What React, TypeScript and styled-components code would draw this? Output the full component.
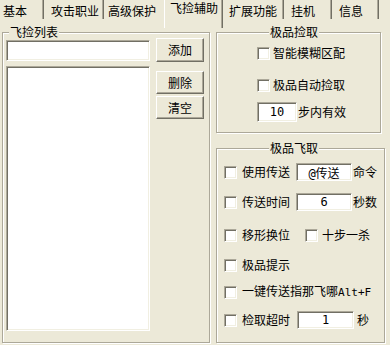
import React from 'react';
import styled, { createGlobalStyle } from 'styled-components';

const GlobalStyle = createGlobalStyle`
  html, body {
    margin: 0;
    padding: 0;
    background: #ece9d8;
  }
  body {
    font-family: "Noto Sans CJK SC", "Noto Sans", sans-serif;
    font-size: 12px;
    color: #000;
  }
`;

const Window = styled.div`
  width: 390px;
  height: 345px;
  overflow: hidden;
  background: #ece9d8;
  display: flex;
  flex-direction: column;
`;

const TabStrip = styled.div`
  display: flex;
  align-items: flex-start;
  height: 32px;
  flex-shrink: 0;
`;

const Tab = styled.div<{ $w: number; $pad: number; $active?: boolean; $noSep?: boolean }>`
  box-sizing: border-box;
  width: ${(p) => p.$w}px;
  height: ${(p) => (p.$active ? 28 : 19)}px;
  padding-left: ${(p) => p.$pad}px;
  padding-top: ${(p) => (p.$active ? 1 : 4)}px;
  line-height: 14px;
  white-space: nowrap;
  border-left: 1px solid ${(p) => (p.$active ? '#ffffff' : 'transparent')};
  border-right: 1px solid ${(p) => (p.$noSep ? 'transparent' : '#716f64')};
  box-shadow: ${(p) => (p.$noSep ? 'none' : 'inset -1px 0 0 #aca899')};
`;

const Body = styled.div`
  display: flex;
  gap: 6px;
  padding-left: 2px;
`;

const GroupBox = styled.div<{ $w: number; $h: number }>`
  position: relative;
  box-sizing: border-box;
  width: ${(p) => p.$w}px;
  height: ${(p) => p.$h}px;
  border: 1px solid #aca899;
  box-shadow: inset 1px 1px 0 #ffffff, 1px 1px 0 #ffffff;
  flex-shrink: 0;
`;

const GroupTitle = styled.span<{ $left: number }>`
  position: absolute;
  top: -9px;
  left: ${(p) => p.$left}px;
  padding: 0 1px;
  line-height: 16px;
  background: #ece9d8;
  white-space: nowrap;
`;

const ListGroup = styled(GroupBox)`
  display: flex;
  gap: 6px;
  padding: 0 0 11px 3px;
`;

const ListColumn = styled.div`
  display: flex;
  flex-direction: column;
  width: 144px;
  padding-top: 7px;
  gap: 5px;
`;

const sunken = `
  box-sizing: border-box;
  background: #ffffff;
  border: 1px solid;
  border-color: #aca899 #ffffff #ffffff #aca899;
  box-shadow: inset 1px 1px 0 #716f64, inset -1px -1px 0 #f1efe2;
`;

const TextField = styled.input<{ $w: number; $h: number; $ml?: number }>`
  ${sunken}
  width: ${(p) => p.$w}px;
  height: ${(p) => p.$h}px;
  padding: 0;
  margin: 0 0 0 ${(p) => p.$ml ?? 0}px;
  outline: none;
  text-align: center;
  font-family: "DejaVu Sans Mono", "Noto Sans CJK SC", monospace;
  font-size: 12px;
  color: #000;
  flex-shrink: 0;
`;

const ListBox = styled.div`
  ${sunken}
  flex: 1;
`;

const ButtonColumn = styled.div`
  display: flex;
  flex-direction: column;
`;

const Button = styled.button<{ $h: number; $mt: number }>`
  box-sizing: border-box;
  width: 48px;
  height: ${(p) => p.$h}px;
  margin: ${(p) => p.$mt}px 0 0 0;
  padding: 0;
  background: #ece9d8;
  border: 1px solid;
  border-color: #ffffff #716f64 #716f64 #ffffff;
  box-shadow: inset -1px -1px 0 #aca899;
  font-family: inherit;
  font-size: 12px;
  line-height: 14px;
  color: #000;
`;

const RightColumn = styled.div`
  display: flex;
  flex-direction: column;
  gap: 15px;
`;

const OptionGroup = styled(GroupBox)<{ $indent: number }>`
  display: flex;
  flex-direction: column;
  padding-left: ${(p) => p.$indent}px;
`;

const OptionRow = styled.div<{ $mt: number }>`
  display: flex;
  align-items: center;
  height: 20px;
  margin-top: ${(p) => p.$mt}px;
  white-space: nowrap;
`;

const Check = styled.span<{ $ml?: number }>`
  ${sunken}
  width: 13px;
  height: 13px;
  margin-left: ${(p) => p.$ml ?? 0}px;
  flex-shrink: 0;
`;

const Label = styled.span<{ $ml?: number }>`
  margin-left: ${(p) => p.$ml ?? 0}px;
  line-height: 14px;
`;

const Latin = styled.span`
  font-family: "DejaVu Sans Mono", monospace;
  font-size: 11px;
`;

const tabs = [
  { label: '基本', w: 44, pad: 2 },
  { label: '攻击职业', w: 60, pad: 6 },
  { label: '高级保护', w: 60, pad: 3, noSep: true },
  { label: '飞捡辅助', w: 59, pad: 5, active: true },
  { label: '扩展功能', w: 61, pad: 5 },
  { label: '挂机', w: 48, pad: 6 },
  { label: '信息', w: 47, pad: 6 },
];

export default function App() {
  return (
    <Window>
      <GlobalStyle />
      <TabStrip>
        {tabs.map((t) => (
          <Tab key={t.label} $w={t.w} $pad={t.pad} $active={t.active} $noSep={t.noSep}>
            {t.label}
          </Tab>
        ))}
      </TabStrip>
      <Body>
        <ListGroup $w={208} $h={311}>
          <GroupTitle $left={6}>飞捡列表</GroupTitle>
          <ListColumn>
            <TextField $w={144} $h={21} defaultValue="" />
            <ListBox />
          </ListColumn>
          <ButtonColumn>
            <Button $h={24} $mt={5}>添加</Button>
            <Button $h={23} $mt={9}>删除</Button>
            <Button $h={23} $mt={2}>清空</Button>
          </ButtonColumn>
        </ListGroup>
        <RightColumn>
          <OptionGroup $w={165} $h={101} $indent={40}>
            <GroupTitle $left={52}>极品捡取</GroupTitle>
            <OptionRow $mt={10}>
              <Check />
              <Label $ml={3}>智能模糊区配</Label>
            </OptionRow>
            <OptionRow $mt={12}>
              <Check />
              <Label $ml={3}>极品自动捡取</Label>
            </OptionRow>
            <OptionRow $mt={7}>
              <TextField $w={40} $h={20} defaultValue="10" />
              <Label $ml={1}>步内有效</Label>
            </OptionRow>
          </OptionGroup>
          <OptionGroup $w={169} $h={195} $indent={7}>
            <GroupTitle $left={52}>极品飞取</GroupTitle>
            <OptionRow $mt={13}>
              <Check />
              <Label $ml={5}>使用传送</Label>
              <TextField $w={56} $h={18} $ml={6} defaultValue="@传送" />
              <Label $ml={1}>命令</Label>
            </OptionRow>
            <OptionRow $mt={10}>
              <Check />
              <Label $ml={5}>传送时间</Label>
              <TextField $w={56} $h={18} $ml={6} defaultValue="6" />
              <Label $ml={1}>秒数</Label>
            </OptionRow>
            <OptionRow $mt={13}>
              <Check />
              <Label $ml={5}>移形换位</Label>
              <Check $ml={15} />
              <Label $ml={4}>十步一杀</Label>
            </OptionRow>
            <OptionRow $mt={10}>
              <Check />
              <Label $ml={5}>极品提示</Label>
            </OptionRow>
            <OptionRow $mt={7}>
              <Check />
              <Label $ml={5}>
                一键传送指那飞哪<Latin>Alt+F</Latin>
              </Label>
            </OptionRow>
            <OptionRow $mt={8}>
              <Check />
              <Label $ml={5}>检取超时</Label>
              <TextField $w={57} $h={18} $ml={7} defaultValue="1" />
              <Label $ml={3}>秒</Label>
            </OptionRow>
          </OptionGroup>
        </RightColumn>
      </Body>
    </Window>
  );
}
